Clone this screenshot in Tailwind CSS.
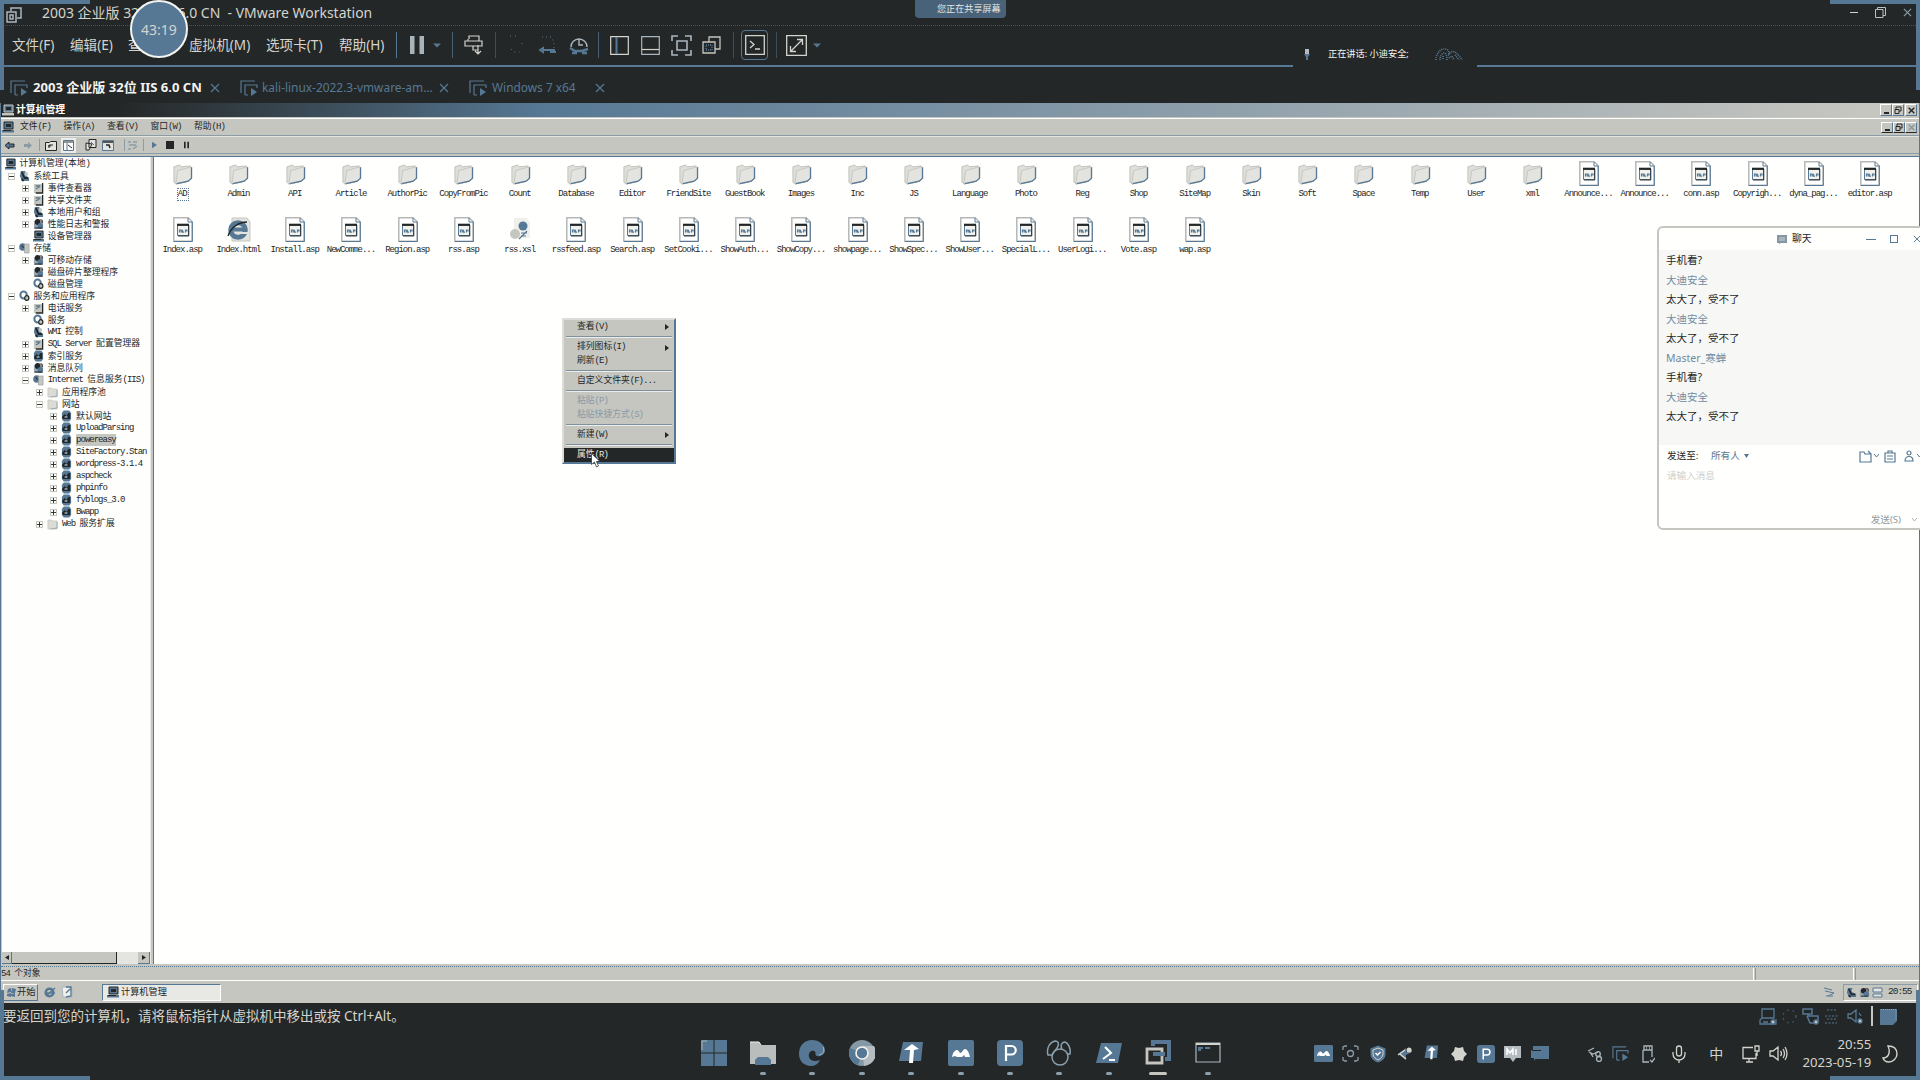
<!DOCTYPE html>
<html lang="zh-CN">
<head>
<meta charset="utf-8">
<title>VMware Workstation</title>
<script src="https://cdn.jsdelivr.net/npm/@tailwindcss/browser@4"></script>
</head>
<body class="relative flex h-[1080px] w-[1920px] flex-col overflow-hidden bg-[#242727] font-['Noto_Sans','Noto_Sans_CJK_SC',sans-serif] text-[#d4d4ce]">

<!-- icon sprite -->
<svg class="hidden">
  <symbol id="vmtab" viewBox="0 0 18 16"><g fill="none" stroke="#567894" stroke-width="1.2"><path d="M1 13V1h14M5 15V5h12v3M5 15h3"/></g><path d="M11 8l6 4-6 4z" fill="#567894"/></symbol>
  <symbol id="x" viewBox="0 0 10 10"><path d="M1 1l8 8M9 1l-8 8" fill="none" stroke="currentColor" stroke-width="1.2"/></symbol>
  <symbol id="folder" viewBox="0 0 22 22"><path d="M2 3l6-2 2 2 9-1v13l-4 4-11 2-2-2z" fill="#dededa" stroke="#c0c0ba"/><path d="M6 7l14-4v12l-3 3-13 3z" fill="#e3e3df" stroke="#c6c6c0"/><path d="M20.500 3.500v11.500l-3.500 3-12 2.500" fill="none" stroke="#567894" stroke-width="1.300"/></symbol>
  <symbol id="file" viewBox="0 0 20 25"><path d="M.8.8h14.400l4 4v19.400H.8z" fill="#fff" stroke="#b5b8b6" stroke-width="1.500"/><path d="M15 1v4h4.300v19.500H1" fill="none" stroke="#567894"/><path d="M4.500 8h11v10.500h-11z" fill="#f1f1ee" stroke="#567894"/><path d="M4 7.800h12" stroke="#242727" stroke-width="2.200"/><path d="M15.800 8v11H5" fill="none" stroke="#242727" stroke-width=".9"/><path d="M6.500 15.500v-2.500h1.700v2.500M9.500 12.700v2.500h1.500M12.500 15.500v-2.500h1.500v1.500" fill="none" stroke="#567894" stroke-width="1.200"/></symbol>
  <symbol id="ie" viewBox="0 0 24 25"><path d="M5 1h15l3 4v19H5z" fill="#e3e3df" stroke="#c6c6c0"/><circle cx="11" cy="13" r="7.300" fill="none" stroke="#567894" stroke-width="5"/><path d="M6 12.500h13" stroke="#567894" stroke-width="4"/><path d="M12 16h9" stroke="#e3e3df" stroke-width="2"/><path d="M1 19C4 10 12 5 20 5" fill="none" stroke="#242727" stroke-width="1.300"/></symbol>
  <symbol id="xsl" viewBox="0 0 22 25"><path d="M5 1h13l3 4v16H5z" fill="#efefec"/><circle cx="14" cy="9" r="4.500" fill="#567894"/><circle cx="6" cy="17" r="5" fill="#c6c6c0"/><path d="M10 22l8-8M12 16h6M12 19h5" stroke="#567894" stroke-width="1.200"/></symbol>
  <symbol id="pc" viewBox="0 0 12 12"><path d="M2 1h9v7H2z" fill="#567894" stroke="#242727"/><path d="M4 3h5v3H4z" fill="#242727"/><path d="M0 9h12v2.500H0z" fill="#567894"/><path d="M1 9.500h8" stroke="#242727"/></symbol>
  <symbol id="pcl" viewBox="0 0 12 12"><path d="M2 1h9v7H2z" fill="#567894" stroke="#c6c6c0"/><path d="M4 3h5v3H4z" fill="#242727"/><path d="M0 9h12v2.500H0z" fill="#c6c6c0"/></symbol>
  <symbol id="tool" viewBox="0 0 12 12"><path d="M2 1h5v4l4 3v3H3L1 6z" fill="#567894"/><path d="M3 2l3 6h4M3 9l2 2" stroke="#242727" stroke-width="1.800" fill="none"/><circle cx="8" cy="4" r="2" fill="#c6c6c0"/></symbol>
  <symbol id="book" viewBox="0 0 12 12"><path d="M1 2h9v9H1z" fill="#c6c6c0"/><path d="M10.500 1v10H3" fill="none" stroke="#242727" stroke-width="1.400"/><path d="M3 4h5M3 7l4-2" stroke="#567894" stroke-width="1.300"/></symbol>
  <symbol id="disk" viewBox="0 0 12 12"><path d="M1 3h10v8H1z" fill="#9aa6ad"/><circle cx="5" cy="4" r="3" fill="#242727"/><circle cx="8" cy="8" r="3" fill="#567894"/><path d="M2 10h8M7 2h3v3" stroke="#242727" fill="none"/></symbol>
  <symbol id="gear" viewBox="0 0 12 12"><circle cx="5" cy="5" r="3.500" fill="none" stroke="#567894" stroke-width="2.200"/><circle cx="8.500" cy="8" r="2.300" fill="#c6c6c0" stroke="#242727" stroke-width="1.300"/></symbol>
  <symbol id="globe" viewBox="0 0 12 12"><path d="M1 3l2-2.500h6L11 3v6l-2 2.500H3L1 9z" fill="#567894"/><path d="M1 7l3-3 2 2 2-3h2v6H2z" fill="#242727"/><path d="M4 6h3v2H4z" fill="#7e94a5"/></symbol>
  <symbol id="srv" viewBox="0 0 12 12"><circle cx="4" cy="5" r="3.800" fill="#567894"/><path d="M6 2h5v9H6z" fill="#c6c6c0" stroke="#8b979d" stroke-width=".6"/><path d="M3 3l2 3" stroke="#242727"/></symbol>
  <symbol id="sfold" viewBox="0 0 12 12"><path d="M1 2h4l1 1h5v8H1z" fill="#dcdcd7" stroke="#c0c0ba" stroke-width=".7"/><path d="M11 4v6l-7 1" fill="none" stroke="#8ba0ae" stroke-width=".8"/></symbol>
  <symbol id="m" viewBox="0 0 26 26"><rect width="26" height="26" rx="2" fill="#567894"/><path d="M4 17c1-5 3-7 5-7 2 0 2 3 3.500 3S15 9 17 9s4 3 5 8h-5l-1-2-2 2H9l-2-1z" fill="#fff"/></symbol>
  <symbol id="p" viewBox="0 0 26 26"><rect width="26" height="26" rx="4" fill="#567894"/><path d="M9 21V6h5.500a4 4 0 0 1 0 8.500H9.500" fill="none" stroke="#fff" stroke-width="2.200"/></symbol>
  <symbol id="t" viewBox="0 0 26 26"><path d="M5 2h20l-2 19H1z" fill="#567894"/><path d="M6 10l8-6 7 5-5 1-1 13h-4l1-13z" fill="#fff"/></symbol>
</svg>

<!-- title bar -->
<header class="flex h-[26px] shrink-0 items-center border-b border-dotted border-[#567894]/60 pl-[6px] pr-[8px]">
  <svg class="mt-[5px] h-4 w-4" viewBox="0 0 16 16" fill="none" stroke="#a9b6bf" stroke-width="1.500"><path d="M5 4V1h10v10h-4M1 5h9v10H1zM4 8h3v4H4z"/></svg>
  <span class="ml-[20px] whitespace-pre text-[13.980px] leading-[24px]">2003 企业版 32位 IIS 6.0 CN  - VMware Workstation</span>
  <div class="ml-auto flex items-center">
    <span class="h-px w-2 bg-[#d4d4ce]"></span>
    <svg class="ml-[17px] h-[11px] w-[11px]" viewBox="0 0 11 11" fill="none" stroke="#b8c1c6"><path d="M.5 2.500h7.500v8H.5zM2.500 2.500v-2h8v8H8"/></svg>
    <svg class="ml-[17px] h-[9px] w-[9px] text-[#8b9fae]"><use href="#x"/></svg>
  </div>
</header>

<!-- menu and toolbar -->
<div class="flex h-[41px] shrink-0 items-center border-b-2 border-[#567894] pb-px pl-[12px] text-[13.600px]">
  <span class="w-[58px]">文件(F)</span><span class="w-[58px]">编辑(E)</span><span class="w-[61px]">查看(V)</span><span class="w-[77px]">虚拟机(M)</span><span class="w-[73px]">选项卡(T)</span><span class="w-[57px]">帮助(H)</span>
  <span class="h-[26px] w-px bg-[#567894]"></span>
  <svg class="ml-[13px] h-[18px] w-[15px]" viewBox="0 0 15 18" fill="#a9b4ba"><path d="M0 0h4.500v18H0zM9.500 0H14v18H9.500z"/></svg>
  <svg class="ml-[8px] h-[6px] w-[8px]" viewBox="0 0 10 6"><path d="M0 1h10L5 6z" fill="#567894"/></svg>
  <span class="ml-[11px] h-[26px] w-px bg-[#567894]/70"></span>
  <svg class="ml-[11px] h-[20px] w-[20px]" viewBox="0 0 20 20" fill="none" stroke="#d4d4ce" stroke-width="1.200"><path d="M5 4V1h10v5M1 6h17v5H1zM4 6V4M9 11v4h5M14 10v9M11 16l3 3 3-3"/></svg>
  <span class="ml-[11px] h-[26px] w-px bg-[#567894]/50"></span>
  <svg class="ml-[10px] h-[20px] w-[20px]" viewBox="0 0 20 20" fill="none" stroke="#567894" stroke-width="1" stroke-dasharray="1 4"><path d="M4 1h7M16 8v5M5 14l2 3h7"/></svg>
  <svg class="ml-[13px] h-[20px] w-[18px]" viewBox="0 0 18 20" fill="none" stroke="#567894"><path d="M3 2h9l3 5v6" stroke-dasharray="1 3"/><path d="M1 15l3-2v4zM4 15h12M11 17h6" stroke-width="2"/></svg>
  <svg class="ml-[12px] h-[20px] w-[20px]" viewBox="0 0 20 20" fill="none" stroke="#a9b6bf" stroke-width="1.400"><path d="M2 12A8 8 0 1 1 18 12M10 4v6h4"/><path d="M1 13l5 3h7l6-2M3 18h5M13 18h5" stroke="#567894" stroke-width="2.500"/></svg>
  <span class="ml-[9px] h-[26px] w-px bg-[#567894]/70"></span>
  <svg class="ml-[11px] h-[19px] w-[19px]" viewBox="0 0 19 19" fill="none" stroke="#d4d4ce" stroke-width="1.200"><path d="M.7.7h17.600v17.600H.7z"/><path d="M6.500 1v17" stroke="#567894" stroke-width="2"/></svg>
  <svg class="ml-[12px] h-[19px] w-[19px]" viewBox="0 0 19 19" fill="none" stroke="#a9b6bf" stroke-width="1.200"><path d="M.7.7h17.600v17.600H.7z"/><path d="M1 13.500h17" stroke="#d4d4ce"/></svg>
  <svg class="ml-[11px] h-[21px] w-[21px]" viewBox="0 0 21 21" fill="none" stroke="#a9b6bf" stroke-width="1.600"><path d="M1 6V1h6M14 1h6v5M20 15v5h-6M7 20H1v-5M6 6h10v9H6z"/></svg>
  <svg class="ml-[10px] h-[19px] w-[19px]" viewBox="0 0 19 19" fill="none" stroke="#c6c6c0" stroke-width="1.300"><path d="M7 6V1h11v12h-5M1 6h12v11H1z"/><path d="M4 9h6v5H4z" stroke="#567894" stroke-dasharray="1 1"/></svg>
  <span class="ml-[12px] h-[26px] w-px bg-[#567894]/50"></span>
  <span class="ml-[7px] flex h-[30px] w-[27px] items-center justify-center rounded-sm border border-[#567894]"><svg class="h-[20px] w-[20px]" viewBox="0 0 20 20" fill="none" stroke="#d4d4ce" stroke-width="1.300"><path d="M.7.7h18.600v18.600H.7zM5 6l4 3.500L5 13M10 14h5"/></svg></span>
  <span class="ml-[8px] h-[26px] w-px bg-[#567894]/50"></span>
  <svg class="ml-[9px] h-[21px] w-[21px]" viewBox="0 0 21 21" fill="none" stroke="#d4d4ce" stroke-width="1.300"><path d="M.7.7h19.600v19.600H.7zM5 16L16 5M11 4.500h5.500V10M4.500 11v5.500H10"/></svg>
  <svg class="ml-[6px] h-[6px] w-[8px]" viewBox="0 0 10 6"><path d="M0 1h10L5 6z" fill="#567894"/></svg>
</div>

<!-- VM tabs -->
<nav class="flex h-[36px] shrink-0 items-center pt-[6px] text-[11.900px] text-[#567894]">
  <svg class="ml-[10px] h-4 w-[18px]"><use href="#vmtab"/></svg><span class="ml-[5px] w-[177px] whitespace-nowrap text-[13.050px] font-bold text-[#f3f3ef]">2003 企业版 32位 IIS 6.0 CN</span><svg class="h-[10px] w-[10px]"><use href="#x"/></svg>
  <svg class="ml-[20px] h-4 w-[18px]"><use href="#vmtab"/></svg><span class="ml-[4px] w-[177px] whitespace-nowrap">kali-linux-2022.3-vmware-am...</span><svg class="h-[10px] w-[10px]"><use href="#x"/></svg>
  <svg class="ml-[20px] h-4 w-[18px]"><use href="#vmtab"/></svg><span class="ml-[5px] w-[103px] whitespace-nowrap">Windows 7 x64</span><svg class="h-[10px] w-[10px]"><use href="#x"/></svg>
</nav>

<!-- guest desktop -->
<main class="flex h-[900px] shrink-0 flex-col border-x border-[#567894] bg-[#c6c6c0] text-[8.800px] text-[#242727]">
  <div class="flex h-[14px] shrink-0 items-center bg-linear-to-r from-[#242727] from-6% via-[#567894] via-28% to-[#c6c6c0] to-97% pl-px pr-[2px]">
    <svg class="h-3 w-3"><use href="#pcl"/></svg><span class="ml-[2px] text-[9.800px] font-bold leading-[14px] text-white">计算机管理</span>
    <div class="ml-auto flex h-3 text-[#242727]">
      <span class="flex w-3 items-end justify-center border border-t-white border-l-white border-b-[#567894] border-r-[#567894] bg-[#c6c6c0] pb-px"><i class="h-[2px] w-[5px] bg-[#242727]"></i></span>
      <span class="flex w-3 items-center justify-center border border-t-white border-l-white border-b-[#567894] border-r-[#567894] bg-[#c6c6c0]"><svg class="h-2 w-2" viewBox="0 0 8 8" fill="none" stroke="#242727"><path d="M2 3V1h5v4H5M1 3.500h4v4H1z"/></svg></span>
      <span class="ml-px flex w-3 items-center justify-center border border-t-white border-l-white border-b-[#567894] border-r-[#567894] bg-[#c6c6c0]"><svg class="h-[7px] w-[7px]" viewBox="0 0 10 10"><path d="M1 1l8 8M9 1l-8 8" stroke="#242727" stroke-width="2"/></svg></span>
    </div>
  </div>
  <div class="mt-px flex h-[18px] shrink-0 items-center border-t border-b border-t-white border-b-[#8c9ca6] pl-px pr-[2px]">
    <svg class="h-3 w-3"><use href="#pc"/></svg>
    <div id="gmenu" class="mt-px ml-[6px] flex"></div>
    <div class="ml-auto flex h-[11px]">
      <span class="flex w-3 items-end justify-center border border-t-white border-l-white border-b-[#242727] border-r-[#567894] pb-px"><i class="h-[2px] w-[5px] bg-[#242727]"></i></span>
      <span class="flex w-3 items-center justify-center border border-t-white border-l-white border-b-[#242727] border-r-[#567894]"><svg class="h-2 w-2" viewBox="0 0 8 8" fill="none" stroke="#242727"><path d="M2 3V1h5v4H5M1 3.500h4v4H1z"/></svg></span>
      <span class="flex w-3 items-center justify-center border border-t-white border-l-white border-b-[#242727] border-r-[#567894]"><svg class="h-[7px] w-[7px]" viewBox="0 0 10 10"><path d="M1 1l8 8M9 1l-8 8" stroke="#8796a0" stroke-width="2"/></svg></span>
    </div>
  </div>
  <div class="flex h-[18px] shrink-0 items-center border-t border-b border-t-[#e3e3df] border-b-[#8c9ca6] pl-[4px]">
    <svg class="h-[9px] w-[10px]" viewBox="0 0 10 9"><path d="M0 4.500L4 1v2h5v3H4v2z" fill="#567894" stroke="#242727"/></svg>
    <svg class="ml-[8px] h-[9px] w-[10px]" viewBox="0 0 10 9"><path d="M9 4.500L5 1v2H1v3h4v2z" fill="#8c9ca6"/></svg>
    <span class="ml-[6px] h-3 w-px bg-[#8c9ca6]"></span>
    <svg class="ml-[5px] h-[11px] w-[12px]" viewBox="0 0 12 11" fill="#e3e3df" stroke="#242727"><path d="M.5 2.500h4l1-1h6v9H.5zM4 8V5h4M3 6h3"/></svg>
    <span class="ml-[4px] flex h-[15px] w-[15px] items-center justify-center bg-[#ececea]"><svg class="h-[11px] w-[11px]" viewBox="0 0 11 11" fill="#fff" stroke="#567894"><path d="M.5.500h10v10H.5zM4 3v7"/><path d="M1 2h9M5 5l4 3" stroke="#242727"/></svg></span>
    <svg class="ml-[9px] h-[12px] w-[12px]" viewBox="0 0 12 12" fill="#e3e3df" stroke="#242727"><path d="M4 .5h7v8H4zM1 4l6 1-3 6H1z"/><path d="M6 3l3 3" stroke="#567894"/></svg>
    <svg class="ml-[5px] h-[11px] w-[12px]" viewBox="0 0 12 11" fill="#e3e3df" stroke="#567894"><path d="M.5.500h11v10H.5z"/><path d="M1 2h10M4 5h3l1 3" stroke="#242727" stroke-width="1.500"/></svg>
    <span class="ml-[10px] h-3 w-px bg-[#8c9ca6]"></span>
    <svg class="ml-[2px] h-[11px] w-[11px]" viewBox="0 0 11 11" fill="none" stroke="#8c9ca6" stroke-width="1.500"><path d="M1 2h3M6 2h4M2 5h7M1 9h3M6 9l4-3"/></svg>
    <span class="ml-[5px] h-3 w-px bg-[#8c9ca6]"></span>
    <svg class="ml-[8px] h-[8px] w-[5px]" viewBox="0 0 6 8"><path d="M0 0l6 4-6 4z" fill="#567894"/></svg>
    <span class="ml-[9px] h-[8px] w-[8px] bg-[#242727]"></span>
    <svg class="ml-[10px] h-[8px] w-[5px]" viewBox="0 0 6 8"><path d="M0 0h2v8H0zM4 0h2v8H4z" fill="#242727"/></svg>
  </div>
  <div class="mt-[2px] h-px shrink-0 bg-[#567894]"></div>

  <!-- tree and file list -->
  <div class="flex h-[807px] shrink-0">
    <div class="flex w-[149px] shrink-0 flex-col border-l border-[#c6c6c0] bg-[#fefefd]">
      <div id="tree" class="grow overflow-hidden pt-px"></div>
      <div class="flex h-[12px] items-stretch bg-[#e4e4e0]">
        <span class="flex w-[10px] items-center justify-center border-r border-b border-[#567894] bg-[#c6c6c0]"><svg class="h-[5px] w-[4px]" viewBox="0 0 4 5"><path d="M4 0v5L0 2.500z" fill="#242727"/></svg></span>
        <span class="w-[105px] border-r border-b border-[#242727] bg-[#c6c6c0]"></span>
        <span class="ml-auto flex w-[12px] items-center justify-center border-r border-b border-[#567894] bg-[#c6c6c0]"><svg class="h-[5px] w-[4px]" viewBox="0 0 4 5"><path d="M0 0v5l4-2.500z" fill="#242727"/></svg></span>
      </div>
    </div>
    <div class="w-[3px] shrink-0 border-l border-[#e8e8e5] bg-[#c6c6c0]"></div>
    <div id="files" class="grid grow auto-rows-[56px] grid-cols-[repeat(31,56.250px)] content-start border-l border-[#567894] bg-[#fffffd] pl-[0.600px]"></div>
  </div>

  <!-- status line -->
  <div class="flex h-[17px] shrink-0 items-center border-b border-white">
    <div class="mt-[2px] flex h-[14px] w-full items-center border-t border-dotted border-[#567894]">
      <span id="count" class="mt-px whitespace-nowrap"></span>
      <span class="ml-auto h-3 w-px bg-white"></span><span class="ml-px h-3 w-px bg-[#8c9ca6]"></span>
      <span class="ml-[97px] h-3 w-px bg-white"></span><span class="mr-[63px] ml-px h-3 w-px bg-[#8c9ca6]"></span>
    </div>
  </div>
  <!-- guest taskbar -->
  <div class="flex grow items-center">
    <div class="ml-[2px] flex h-[17px] w-[35px] items-center border border-t-white border-l-white border-r-[#567894] border-b-[#567894] pl-[3px]"><svg class="h-[11px] w-[9px]" viewBox="0 0 9 11"><path d="M1 2l3-1v4L0 6zM5 1l4 1-1 4H4zM0 7l4-1v4L0 9zM4 7l4-1v4l-4-1z" fill="#567894"/></svg><span class="ml-px whitespace-nowrap text-[9.300px]">开始</span></div>
    <svg class="ml-[6px] h-3 w-3" viewBox="0 0 12 12"><circle cx="5.500" cy="6.500" r="3.800" fill="none" stroke="#567894" stroke-width="2.600"/><path d="M3 7h8M2 10l9-8" stroke="#567894" stroke-width="1.500"/></svg>
    <svg class="ml-[5px] h-3 w-3" viewBox="0 0 12 12"><path d="M1 1h8l2 3v7H2z" fill="#efefec" stroke="#a9b6bf"/><path d="M5 1h5v9l-5 1M5 7l4-4" fill="none" stroke="#567894" stroke-width="1.400"/></svg>
    <div class="ml-[29px] flex h-[17px] w-[119px] items-center border border-t-[#567894] border-l-[#567894] border-r-white border-b-white bg-[#e8e8e4] pl-[4px]"><svg class="h-3 w-3"><use href="#pc"/></svg><span class="ml-[2px] text-[9.200px]">计算机管理</span></div>
    <svg class="ml-auto h-[10px] w-[11px]" viewBox="0 0 11 10" fill="none" stroke="#567894"><path d="M0 1l8 2M1 4l9 2-6 3M2 9h7"/></svg>
    <div class="mr-px ml-[8px] flex h-[17px] w-[75px] items-center border border-t-[#8c9ca6] border-l-[#8c9ca6] border-r-white border-b-white pl-[2px]">
      <svg class="h-[11px] w-[11px]" viewBox="0 0 12 12"><use href="#tool"/></svg><svg class="ml-[2px] h-[11px] w-[11px]" viewBox="0 0 12 12"><use href="#disk"/></svg>
      <svg class="ml-[2px] h-[11px] w-[11px]" viewBox="0 0 11 11" fill="#e3e3df" stroke="#567894"><path d="M1 1h9v4H1zM1 7h9v3H1z"/></svg>
      <span class="ml-[5px] font-['Liberation_Mono',monospace] text-[9.500px] tracking-[-1px]">20:55</span>
    </div>
  </div>
</main>

<!-- VM message line -->
<div class="flex h-[26px] shrink-0 items-center pr-[23px]">
  <span class="ml-[3px] whitespace-nowrap text-[13.500px]">要返回到您的计算机，请将鼠标指针从虚拟机中移出或按 Ctrl+Alt。</span>
  <div class="ml-auto flex items-center">
    <svg class="h-[17px] w-[18px]" viewBox="0 0 18 17" fill="none" stroke="#567894" stroke-width="1.300"><path d="M3 1h12v9H3zM3 10l-2 2v4h16v-5M4 14h5"/><circle cx="14" cy="14" r="2" fill="#c6c6c0"/></svg>
    <svg class="ml-[5px] h-[15px] w-[15px]" viewBox="0 0 15 15" fill="none" stroke="#567894" stroke-dasharray="1.500 4"><circle cx="7.500" cy="7.500" r="6.500"/></svg>
    <svg class="ml-[5px] h-[17px] w-[17px]" viewBox="0 0 17 17" fill="none" stroke="#567894" stroke-width="1.500"><path d="M1 1h9v5H1zM6 6v2h10v5M5 8l3 7h4"/><circle cx="14" cy="14" r="2" fill="#c6c6c0"/></svg>
    <svg class="ml-[6px] h-[15px] w-[13px]" viewBox="0 0 13 15" fill="none" stroke="#567894" stroke-dasharray="2 1.500"><path d="M2 1h9M0 7h13M2 10h9M0 14h12"/></svg>
    <svg class="ml-[9px] h-[16px] w-[16px]" viewBox="0 0 16 16" fill="none" stroke="#567894" stroke-width="1.300"><path d="M1 6h3l5-4v12l-5-4H1zM12 5l2 3"/><circle cx="13" cy="13" r="2" fill="#c6c6c0"/></svg>
    <span class="ml-[8px] h-[20px] w-[2px] bg-[#c6c6c0]"></span>
    <svg class="ml-[7px] h-[17px] w-[17px]" viewBox="0 0 17 17"><path d="M0 1h17v12l-4 4H0z" fill="#567894"/><path d="M1 1.500h15v10" fill="none" stroke="#8ea4b3" stroke-dasharray="1 1"/></svg>
  </div>
</div>

<!-- host taskbar -->
<footer class="flex grow items-center pb-[2px]">
  <div id="dock" class="ml-[689px] flex"></div>
  <div class="ml-[78px] flex items-center">
    <span class="flex w-[27px] justify-center"><svg class="h-[17px] w-[19px]" viewBox="0 0 26 26" preserveAspectRatio="none"><use href="#m"/></svg></span>
    <span class="flex w-[27px] justify-center"><svg class="h-[17px] w-[17px]" viewBox="0 0 17 17" fill="none" stroke="#8a9cab" stroke-width="1.300"><path d="M1 5V2l2-1h2M12 1h2l2 1v3M16 12v3l-2 1h-2M5 16H3l-2-1v-3"/><circle cx="8.500" cy="8.500" r="3"/></svg></span>
    <span class="flex w-[27px] justify-center"><svg class="h-[18px] w-[16px]" viewBox="0 0 16 18"><path d="M8 .5l7.500 3v6c0 4-4 7-7.500 8-3.500-1-7.500-4-7.500-8v-6z" fill="#567894"/><path d="M8 3l5 2v4c0 3-3 5-5 6-2-1-5-3-5-6V5z" fill="none" stroke="#d4d4ce"/><path d="M5.500 8l2 2 3-3" fill="none" stroke="#fff" stroke-width="1.500"/></svg></span>
    <span class="flex w-[27px] justify-center"><svg class="h-[16px] w-[16px]" viewBox="0 0 16 16"><path d="M1 8l8-6v4l5-4 1 4-6 3v5z" fill="#567894"/><path d="M1 9l7-5M3 8l6 5" stroke="#d4d4ce" stroke-width="1.400"/><circle cx="12" cy="4" r="2.500" fill="#d4d4ce"/></svg></span>
    <span class="flex w-[27px] justify-center"><svg class="h-[17px] w-[16px]" viewBox="1 1 24 22" preserveAspectRatio="none"><use href="#t"/></svg></span>
    <span class="flex w-[27px] justify-center"><svg class="h-[16px] w-[16px]" viewBox="0 0 16 16"><path d="M4 1l4 1 4-1 1 4 3 3-3 3-1 4-4-1-4 1-1-4-3-3 3-3z" fill="#d4d4ce"/></svg></span>
    <span class="flex w-[27px] justify-center"><svg class="h-[18px] w-[18px]" viewBox="0 0 26 26"><use href="#p"/></svg></span>
    <span class="flex w-[27px] justify-center"><svg class="h-[17px] w-[17px]" viewBox="0 0 17 17"><path d="M0 1h17v12h-5l-3 4-3-4H0z" fill="#b4bcc1"/><path d="M3 10V4l3 4 3-4v6M12 4v6" fill="none" stroke="#fff" stroke-width="1.500"/></svg></span>
    <span class="flex w-[28px] justify-center"><svg class="h-[15px] w-[18px]" viewBox="0 0 18 15"><path d="M2 0h16v13H4l-1 2v-3H0V4h2z" fill="#567894"/><path d="M1 4.500h9" stroke="#242727"/></svg></span>
  </div>
  <div class="ml-[33px] flex items-center">
    <svg class="h-[16px] w-[16px]" viewBox="0 0 16 16" fill="none" stroke="#a9b6bf" stroke-width="1.300"><path d="M1 5l6-3M2 6l4 2 5-2M3 6l3 5"/><circle cx="11" cy="8" r="2.300"/><circle cx="12" cy="13" r="2.500"/></svg>
    <svg class="ml-[9px] h-[17px] w-[17px]" viewBox="0 0 18 16"><use href="#vmtab"/></svg>
    <svg class="ml-[12px] h-[18px] w-[14px]" viewBox="0 0 14 18" fill="none" stroke="#a9b6bf" stroke-width="1.300"><path d="M3 5V1h8v4M2 5h9v7M2 5v12h6M9 15l2 2 3-4M5 3h1M8 3h1"/></svg>
    <svg class="ml-[17px] h-[18px] w-[14px]" viewBox="0 0 14 18" fill="none" stroke="#d4d4ce" stroke-width="1.300"><path d="M4.500 3.500a2.500 2.500 0 0 1 5 0v5a2.500 2.500 0 0 1-5 0zM1 7v2a6 6 0 0 0 12 0V7M7 15v3"/></svg>
    <span class="ml-[23px] text-[14px]">中</span>
    <svg class="ml-[19px] h-[18px] w-[18px]" viewBox="0 0 18 18" fill="none" stroke="#d4d4ce" stroke-width="1.300"><path d="M11 2.500H1v11h13V8M7 14v3M4 17h7M13 1h4v5h-4zM15 6v5"/></svg>
    <svg class="ml-[9px] h-[17px] w-[19px]" viewBox="0 0 19 17" fill="none" stroke="#d4d4ce" stroke-width="1.300"><path d="M1 6h3l5-4v13l-5-4H1zM11.500 6q2 2.500 0 5M14 4q3 4.500 0 9M16 2q4 6.500 0 13"/></svg>
    <div class="ml-[13px] w-[70px] text-right text-[13.200px] leading-[17.500px] whitespace-nowrap">20:55<br>2023-05-19</div>
    <svg class="ml-[11px] h-[18px] w-[16px]" viewBox="0 0 16 18" fill="none" stroke="#d4d4ce" stroke-width="1.400"><path d="M6 1c7 0 9 4 9 8s-4 8-8 8c-3 0-5-1-6-4 5 0 8-5 5-12z"/></svg>
  </div>
</footer>

<!-- elapsed recording badge -->
<div class="absolute left-[130px] top-0 flex h-[58px] w-[58px] items-center justify-center rounded-full border-[2.500px] border-[#f3f3ef] bg-[#567894] text-[14px]">43:19</div>

<!-- sharing notice -->
<div class="absolute left-[915px] top-0 flex h-[18px] w-[91px] items-center rounded-b-sm bg-[#486379] pl-[22px] text-[9.100px] whitespace-nowrap text-[#e6e6e2]">您正在共享屏幕</div>

<!-- speaker notice -->
<div class="absolute left-[1293px] top-[39px] flex h-[30px] w-[184px] items-center bg-[#242727] pl-[11px] text-[9.200px] text-[#f3f3ef]">
  <svg class="h-[12px] w-[6px]" viewBox="0 0 6 12"><path d="M1 1h4v5H1z" fill="#b4bcc1"/><path d="M0 6h6L4 9v3H2V9z" fill="#567894"/></svg>
  <span class="ml-[18px] w-[107px] whitespace-nowrap">正在讲话: 小迪安全;</span>
  <svg class="h-[13px] w-[29px]" viewBox="0 0 29 13" fill="none" stroke="#567894" stroke-width="1.600" stroke-dasharray="1 1"><path d="M1 12C1 6 5 1 9 1s5 2 5 5c2-3 5-3 7-1s5 4 6 7M5 12c0-4 2-7 4-7s3 3 3 7M14 10l3-2 2 4M20 7l4 5M8 8v4"/></svg>
</div>

<!-- context menu -->
<div id="ctx" class="absolute left-[562px] top-[318px] flex h-[146px] w-[114px] flex-col border-2 border-t-[#dcdcd8] border-l-[#dcdcd8] border-r-[#567894] border-b-[#567894] bg-[#c6c6c0] text-[8.800px] text-[#242727]"></div>
<svg class="absolute left-[591px] top-[453px] h-[15px] w-[10px]" viewBox="0 0 10 15"><path d="M.5.500v11l3-2.500 2 5 2-1-2-4.500H9z" fill="#fff" stroke="#242727" stroke-width=".7"/></svg>

<!-- meeting chat window -->
<section class="absolute left-[1657px] top-[226px] flex h-[304px] w-[270px] flex-col rounded-md border-2 border-[#c6c6c0] bg-[#fffffd] text-[#242727]">
  <div class="flex h-[22px] shrink-0 items-center text-[9.800px]">
    <svg class="ml-[118px] h-[9px] w-[10px]" viewBox="0 0 10 9"><path d="M0 0h10v8H4L2 9V8H0z" fill="#8397a5"/><path d="M2 3h6M2 5h6" stroke="#d4d4ce"/></svg>
    <span class="ml-[5px] w-[74px]">聊天</span>
    <span class="h-px w-[10px] bg-[#567894]"></span>
    <span class="ml-[14px] h-[8px] w-[8px] border border-[#567894]"></span>
    <svg class="ml-[15px] h-[8px] w-[8px] text-[#567894]" viewBox="0 0 10 10"><use href="#x"/></svg>
  </div>
  <div id="chat" class="flex h-[195px] shrink-0 flex-col bg-[#f7f7f5] pt-px pl-[7px] text-[10.500px]"></div>
  <div class="flex h-[22px] shrink-0 items-center pl-[8px] text-[9.600px]">
    <span class="w-[44px]">发送至:</span><span class="text-[#567894]">所有人</span>
    <svg class="ml-[4px] h-[4px] w-[5px]" viewBox="0 0 5 4"><path d="M0 0h5L2.500 4z" fill="#567894"/></svg>
    <svg class="ml-[110px] h-[13px] w-[13px]" viewBox="0 0 13 13" fill="none" stroke="#567894" stroke-width="1.200"><path d="M1 2h4l1 2h6v8H1zM9 1l3 3"/></svg>
    <svg class="ml-[2px] h-[4px] w-[5px]" viewBox="0 0 5 4"><path d="M0 0l2.500 3L5 0" fill="none" stroke="#567894"/></svg>
    <svg class="ml-[5px] h-[13px] w-[12px]" viewBox="0 0 12 13" fill="none" stroke="#567894" stroke-width="1.200"><path d="M1 3h10v9H1zM4 3V1h4v2M3 6h6M3 9h6"/></svg>
    <svg class="ml-[8px] h-[12px] w-[10px]" viewBox="0 0 10 12" fill="none" stroke="#567894" stroke-width="1.200"><circle cx="5" cy="3" r="2"/><path d="M1 11c0-6 8-6 8 0z"/></svg>
    <svg class="ml-[3px] h-[4px] w-[5px]" viewBox="0 0 5 4"><path d="M0 0l2.500 3L5 0" fill="none" stroke="#567894"/></svg>
  </div>
  <div class="mt-[3px] pl-[8px] text-[9.600px] leading-[11px] text-[#d0d0cb]">请输入消息</div>
  <div class="mt-auto flex items-center justify-end pr-[8px] pb-px text-[9.600px] text-[#8f9aa0]">发送(S)<svg class="ml-[11px] h-[4px] w-[5px]" viewBox="0 0 5 4"><path d="M0 0l2.500 3L5 0" fill="none" stroke="#a9b0b3"/></svg></div>
</section>

<!-- share frame corners -->
<div class="absolute top-0 left-0 h-[90px] w-[90px] border-t-4 border-l-4 border-[#567894]"></div>
<div class="absolute top-0 right-0 h-[90px] w-[90px] border-t-4 border-r-4 border-[#567894]"></div>
<div class="absolute bottom-0 left-0 h-[90px] w-[90px] border-b-4 border-l-4 border-[#567894]"></div>
<div class="absolute right-0 bottom-0 h-[90px] w-[90px] border-r-4 border-b-4 border-[#567894]"></div>

<script>
const $ = id => document.getElementById(id);
// half-width runs get a narrow monospace, CJK keeps the inherited face
const mix = s => s.replace(/[\x20-\x7e]+/g, m => `<span class="font-['Liberation_Mono',monospace] text-[9px] tracking-[-1px] whitespace-pre">${m}</span>`);

$('gmenu').innerHTML = ['文件(F)', '操作(A)', '查看(V)', '窗口(W)', '帮助(H)'].map(s => `<span class="w-[43.500px] whitespace-nowrap">${mix(s)}</span>`).join('');
$('count').innerHTML = mix('54 ') + '个对象';

// level, expander, icon, label
const tree = [
  [0, '', 'pc', '计算机管理(本地)'], [1, '-', 'tool', '系统工具'], [2, '+', 'book', '事件查看器'], [2, '+', 'book', '共享文件夹'],
  [2, '+', 'tool', '本地用户和组'], [2, '+', 'disk', '性能日志和警报'], [2, '', 'pc', '设备管理器'], [1, '-', 'srv', '存储'],
  [2, '+', 'disk', '可移动存储'], [2, '', 'disk', '磁盘碎片整理程序'], [2, '', 'gear', '磁盘管理'], [1, '-', 'gear', '服务和应用程序'],
  [2, '+', 'book', '电话服务'], [2, '', 'gear', '服务'], [2, '', 'tool', 'WMI 控制'], [2, '+', 'book', 'SQL Server 配置管理器'],
  [2, '+', 'globe', '索引服务'], [2, '+', 'disk', '消息队列'], [2, '-', 'srv', 'Internet 信息服务(IIS)'], [3, '+', 'sfold', '应用程序池'],
  [3, '-', 'sfold', '网站'], [4, '+', 'globe', '默认网站'], [4, '+', 'globe', 'UploadParsing'], [4, '+', 'globe', 'powereasy'],
  [4, '+', 'globe', 'SiteFactory.Stan'], [4, '+', 'globe', 'wordpress-3.1.4'], [4, '+', 'globe', 'aspcheck'], [4, '+', 'globe', 'phpinfo'],
  [4, '+', 'globe', 'fyblogs_3.0'], [4, '+', 'globe', 'Bwapp'], [3, '+', 'sfold', 'Web 服务扩展']];
$('tree').innerHTML = tree.map(([l, e, i, s]) => `<div class="flex h-3 items-center whitespace-nowrap" style="padding-left:${l ? 5.5 + (l - 1) * 14.2 : 2.5}px">
  ${l ? `<span class="mr-[4px] flex h-[7px] w-[7px] shrink-0 items-center justify-center ${e ? 'border border-[#c6c6c0]' : ''}"><svg class="h-[5px] w-[5px]" viewBox="0 0 5 5"><path d="${e ? 'M0 2.500h5' : ''}${e === '+' ? 'M2.500 0v5' : ''}" stroke="#242727" stroke-width=".9"/></svg></span>` : ''}
  <svg class="mr-[4px] h-[12px] w-[11px] shrink-0" viewBox="0 0 12 12" preserveAspectRatio="none"><use href="#${i}"/></svg><span class="${s === 'powereasy' ? 'bg-[#c6c6c0]' : ''} leading-[11px]">${mix(s)}</span></div>`).join('');

const folders = 'AD Admin API Article AuthorPic CopyFromPic Count Database Editor FriendSite GuestBook Images Inc JS Language Photo Reg Shop SiteMap Skin Soft Space Temp User xml'.split(' ');
const files = 'Announce... Announce... conn.asp Copyrigh... dyna_pag... editor.asp Index.asp Index.html Install.asp NewComme... Region.asp rss.asp rss.xsl rssfeed.asp Search.asp SetCooki... ShowAuth... ShowCopy... showpage... ShowSpec... ShowUser... SpecialL... UserLogi... Vote.asp wap.asp'.split(' ');
const kind = f => f.endsWith('.html') ? 'ie' : f.endsWith('.xsl') ? 'xsl' : 'file';
$('files').innerHTML = folders.map(f => ['folder', f]).concat(files.map(f => [kind(f), f])).map(([k, f]) => `<div class="flex flex-col items-center pt-[3px]">
  <span class="flex h-[26px] items-center"><svg class="${k === 'folder' ? 'mt-[2px] h-[21px] w-[21px]' : k === 'file' ? 'h-[25px] w-[20px]' : 'h-[25px] w-[24px]'}"><use href="#${k}"/></svg></span>
  <span class="mt-[3px] pr-px font-['Liberation_Mono',monospace] text-[9px] leading-[11px] tracking-[-1px] ${f === 'AD' ? 'outline-1 outline-dotted outline-[#567894]' : ''}">${f}</span></div>`).join('');

// null draws a separator
const ctx = [['查看(V)', 1], null, ['排列图标(I)', 1], ['刷新(E)'], null, ['自定义文件夹(F)...'], null, ['粘贴(P)', 0, 1], ['粘贴快捷方式(S)', 0, 1], null, ['新建(W)', 1], null, ['属性(R)', 0, 0, 1]];
$('ctx').innerHTML = ctx.map(c => !c ? '<div class="flex h-[6.800px] items-center"><i class="mx-[2px] h-[2px] grow border-t border-b border-t-[#7f919d] border-b-[#ececea]"></i></div>' :
  `<div class="flex h-[13.500px] items-center justify-between pt-px pr-[5px] pl-[13px] whitespace-nowrap ${c[2] ? 'text-[#8a9aa5]' : c[3] ? 'bg-[#242727] text-[#e6e6e2]' : ''}"><span>${mix(c[0])}</span>${c[1] ? '<svg class="h-[6px] w-[4px]" viewBox="0 0 4 6"><path d="M0 0l4 3-4 3z" fill="#242727"/></svg>' : ''}</div>`).join('');

const chat = ['手机看?', '@大迪安全', '太大了，受不了', '@大迪安全', '太大了，受不了', '@Master_寒蝉', '手机看?', '@大迪安全', '太大了，受不了'];
$('chat').innerHTML = chat.map(s => `<span class="h-[19.500px] leading-[19.500px] ${s[0] === '@' ? 'text-[#6f8ba1]' : ''}">${s.replace('@', '')}</span>`).join('');

const dock = [
  '<path d="M0 0h12.500v12.500H0zM13.500 0H26v12.500H13.500zM0 13.500h12.500V26H0zM13.500 13.500H26V26H13.500z" fill="#567894"/><path d="M1 10V1h5" fill="none" stroke="#a9b6bf"/>',
  '<path d="M0 2h9l2 3h15v19H0z" fill="#b9bdbb"/><path d="M5 25v-5l3-3h10l3 3v5z" fill="#567894"/><path d="M0 2h9l2 3" fill="none" stroke="#f3f3ef"/>',
  '<path d="M0 14C0 5 6 0 13 0s13 5 13 10-5 7-8 6 0-4-3-5-6 2-5 6 6 5 11 3c-2 4-5 6-9 6C5 26 0 21 0 14z" fill="#567894"/><path d="M24 7c2 5 0 7-4 8" fill="none" stroke="#a9b6bf"/>',
  '<circle cx="13" cy="13" r="13" fill="#8598a5"/><path d="M13 13L1 8a13 13 0 0 0 8 17z" fill="#567894"/><path d="M13 6h12a13 13 0 0 1-10 20z" fill="#b4bcc1"/><circle cx="13" cy="13" r="6" fill="#567894" stroke="#f3f3ef" stroke-width="1.600"/>',
  '<use href="#t" width="26" height="26"/>', '<use href="#m" width="26" height="26"/>', '<use href="#p" width="26" height="26"/>',
  '<g fill="none" stroke="#8ba0ae" stroke-width="1.500"><circle cx="14" cy="17" r="8"/><path d="M6 15H2C0 8 4 2 9 1c3 0 4 2 3 5-1 4-4 4-5 8M16 9c-2-4 0-7 3-7 3 1 6 6 5 12h-3"/></g>',
  '<path d="M5 3h21l-4 20H0z" fill="#567894"/><path d="M9 7l6 6-8 6M13 20h6" fill="none" stroke="#fff" stroke-width="2"/>',
  '<path d="M8 6V2h16v17h-4" fill="none" stroke="#567894" stroke-width="4"/><path d="M2 9h15v14H2z" fill="none" stroke="#c6c6c0" stroke-width="2.800"/><path d="M8 14h12" stroke="#567894" stroke-width="4"/>',
  '<path d="M1 3h24v19H1z" fill="none" stroke="#a9b6bf" stroke-width="1.200"/><path d="M1 4h24" stroke="#d4d4ce" stroke-width="2"/><path d="M3 8h5M10 8h5M3 10h3" stroke="#567894" stroke-width="2"/>'];
$('dock').innerHTML = dock.map((d, i) => `<span class="flex w-[49.400px] flex-col items-center pt-[7px]"><svg class="h-[26px] w-[26px]" viewBox="0 0 26 26">${d}</svg>
  <i class="mt-[6px] h-[3px] rounded-full ${i === 0 ? 'w-0' : i === 9 ? 'w-[18px] bg-[#c6c6c0]' : 'w-[6px] bg-[#8ba0ae]'}"></i></span>`).join('');
</script>
</body>
</html>
